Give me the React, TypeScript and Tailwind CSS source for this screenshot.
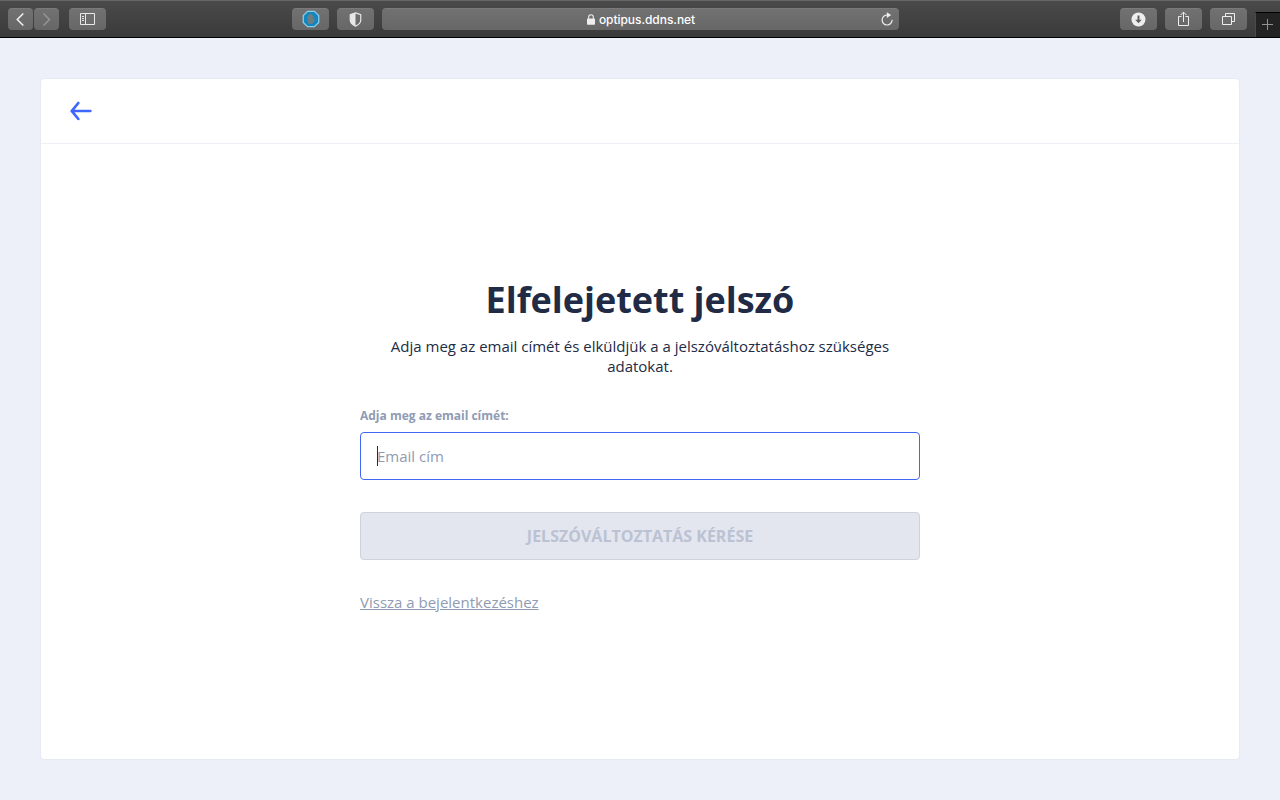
import type { ReactNode } from "react";

function ToolButton({ className = "w-[37px]", label, children }: { className?: string; label: string; children: ReactNode }) {
  return (
    <button
      aria-label={label}
      className={`flex h-[22px] shrink-0 items-center justify-center rounded-[4px] border-t border-[#7a7a7a] bg-linear-to-b from-[#717171] to-[#676767] ${className}`}
    >
      {children}
    </button>
  );
}

function BrowserBar() {
  return (
    <div className="flex h-[38px] shrink-0 border-t border-b border-t-[#666666] border-b-black bg-linear-to-b from-[#4a4a4a] to-[#3a3a3a] pl-2">
      <div className="flex pt-[7px]">
        <ToolButton label="Back" className="w-[25px]">
          <svg className="mb-px" width="25" height="21" viewBox="0 0 25 21" fill="none" stroke="#eeeeee" strokeWidth="1.6"><path d="M15.3 4.5 9.3 10.5l6 6" /></svg>
        </ToolButton>
        <ToolButton label="Forward" className="ml-px w-[25px]">
          <svg className="mb-px" width="25" height="21" viewBox="0 0 25 21" fill="none" stroke="#949494" strokeWidth="1.5"><path d="m9.5 4.5 6 6-6 6" /></svg>
        </ToolButton>
        <ToolButton label="Sidebar" className="ml-[10px] w-[37px]">
          <svg width="15" height="13" viewBox="0 0 15 13" fill="none" stroke="#e8e8e8"><path d="M.5.5h14v11H.5zM5.5.5v11M2 3.5h2M2 5.5h2M2 7.5h2" /></svg>
        </ToolButton>
        <ToolButton label="Blocker" className="ml-[186px] w-[37px]">
          <svg className="mb-px ml-px" width="18" height="18" viewBox="0 0 17 17">
            <path d="M5.3 1.2h6.4l4.1 4.1v6.4l-4.1 4.1H5.3l-4.1-4.1V5.3z" fill="#1287be" stroke="#8acdea" strokeWidth="1.2" />
            <path d="M5.2 5.6q.6-.7 1 0V4.3q.6-.8 1.1 0v-.8q.7-.7 1.2 0v.8q.7-.7 1.2 0v1.3q.7-.6 1.1 0v4l.8-.8q1 0 .6.8l-2 3.1q-1.4 1.2-3.3.4Q5.2 12.3 5.2 10z" fill="#6e7c83" />
          </svg>
        </ToolButton>
        <ToolButton label="Privacy" className="ml-2 w-[37px]">
          <svg className="mb-px" width="13" height="15" viewBox="0 0 12 14"><path d="M6 .8 10.9 2.5v5.2c0 2.5-2 4.2-4.9 5.5C3.1 11.9 1.1 10.2 1.1 7.7V2.5z" fill="none" stroke="#e8e8e8" strokeWidth="1.1" /><path d="M6 .8v12.4C3.1 11.9 1.1 10.2 1.1 7.7V2.5z" fill="#e8e8e8" /></svg>
        </ToolButton>
        <div className="ml-2 grid h-[22px] w-[517px] grid-cols-[20px_1fr_20px] items-center rounded-[4px] border-t border-[#7a7a7a] bg-linear-to-b from-[#717171] to-[#676767]">
          <span />
          <div className="flex items-center justify-center pl-px">
            <svg className="mr-[4px] mb-px" width="8" height="11" viewBox="0 0 8 11"><rect y="4.5" width="8" height="6.2" rx=".7" fill="#eeeeee" /><path d="M1.7 5V3a2.3 2.3 0 0 1 4.6 0v2" fill="none" stroke="#eeeeee" strokeWidth="1.1" /></svg>
            <span className="font-['Inter',sans-serif] text-[12px] leading-4 font-medium tracking-[-0.05px] text-white">optipus.ddns.net</span>
          </div>
          <svg className="mb-px ml-px" width="14" height="15" viewBox="0 0 14 15"><path d="M8 3.1a5 5 0 1 0 4.1 4.7" fill="none" stroke="#eeeeee" strokeWidth="1.2" /><path d="M6.8.2v5.7l4.4-2.8z" fill="#eeeeee" /></svg>
        </div>
      </div>
      <div className="ml-auto flex pt-[7px]">
        <ToolButton label="Downloads">
          <svg className="mb-px" width="15" height="15" viewBox="0 0 15 15"><circle cx="7.5" cy="7.5" r="7" fill="#eeeeee" /><path d="M6.5 3.5h2v4.2h2.3L7.5 11.2 4.2 7.7h2.3z" fill="#606060" /></svg>
        </ToolButton>
        <ToolButton label="Share" className="ml-2 w-[37px]">
          <svg className="mb-[2px]" width="13" height="16" viewBox="0 0 13 16" fill="none" stroke="#eeeeee"><path d="M4.5 5.5h-3v9h10v-9h-3M6.5 11V1.2M3.6 4l2.9-2.9L9.4 4" /></svg>
        </ToolButton>
        <ToolButton label="Tabs" className="ml-2 w-[37px]">
          <svg width="13" height="13" viewBox="0 0 13 13" fill="none" stroke="#eeeeee"><path d="M.5 3.5h9v8h-9zM3.5 3.5v-3h9v8h-3" /></svg>
        </ToolButton>
      </div>
      <button aria-label="New tab" className="mt-[11px] ml-2 flex h-[25px] w-[25px] items-center justify-center border-t border-l border-t-black border-l-[#4a4a4a] bg-[#232323]">
        <svg className="mr-px mb-[2px]" width="11" height="11" viewBox="0 0 11 11" stroke="#929292"><path d="M5.5 0v11M0 5.5h11" /></svg>
      </button>
    </div>
  );
}

export default function App() {
  return (
    <div className="flex h-screen flex-col overflow-hidden bg-[#edf0f8] font-['Open_Sans',sans-serif]">
      <BrowserBar />
      <main className="flex flex-1 px-10 pt-10 pb-10">
        <section className="flex flex-1 flex-col rounded-[4px] border border-[#e6eaf3] bg-white">
          <header className="flex h-[65px] items-center border-b border-[#edf1f7] pl-6">
            <a href="#" aria-label="Vissza">
              <svg width="32" height="32" viewBox="0 0 24 24" fill="#3f67ff"><path d="M19 11H7.14l3.63-4.36a1 1 0 1 0-1.54-1.28l-5 6a1.19 1.19 0 0 0-.09.15c0 .05 0 .08-.07.13A1 1 0 0 0 4 12a1 1 0 0 0 .07.36c0 .05 0 .08.07.13a1.19 1.19 0 0 0 .09.15l5 6A1 1 0 0 0 10 19a1 1 0 0 0 .64-.23 1 1 0 0 0 .13-1.41L7.14 13H19a1 1 0 0 0 0-2z" /></svg>
            </a>
          </header>
          <div className="mx-auto w-[560px] pt-[132px] text-[15px] leading-5 text-[#222b45]">
            <h1 className="text-center text-[36px] leading-[48px] font-bold tracking-[-0.03px]">Elfelejetett jelszó</h1>
            <p className="mt-3 px-5 text-center">Adja meg az email címét és elküldjük a a jelszóváltoztatáshoz szükséges adatokat.</p>
            <label className="mt-8 block text-xs leading-4 font-bold text-[#8f9bb3]">Adja meg az email címét:</label>
            <div className="mt-2 flex h-12 items-center rounded-[4px] border border-[#4066f4] px-4 text-[#8f9bb3]">
              <span className="-mr-px h-5 w-px bg-[#222b45]" />
              <span>Email cím</span>
            </div>
            <button className="mt-8 flex h-12 w-full items-center justify-center rounded-[4px] border border-[#cdd2df] bg-[#e3e6ee] text-base leading-4 font-bold text-[#bbc2d3]">JELSZÓVÁLTOZTATÁS KÉRÉSE</button>
            <a href="#" className="mt-8 inline-block text-[#8f9bb3] underline">Vissza a bejelentkezéshez</a>
          </div>
        </section>
      </main>
    </div>
  );
}
